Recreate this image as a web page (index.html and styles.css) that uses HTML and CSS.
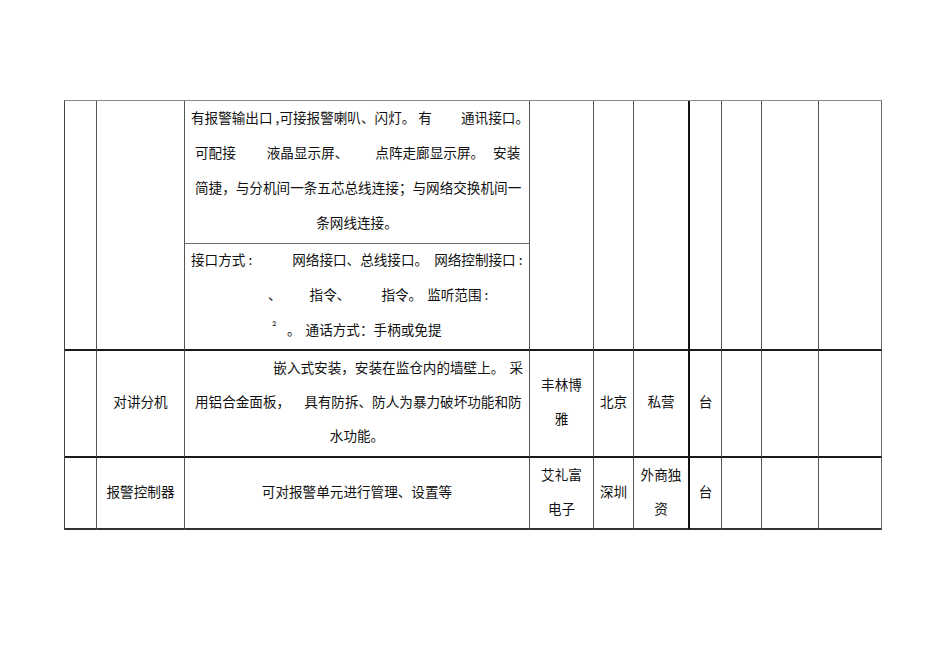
FILE: index.html
```html
<!DOCTYPE html>
<html lang="zh-CN">
<head>
<meta charset="utf-8">
<title>设备清单</title>
<link rel="stylesheet" href="styles.css">
</head>
<body>
<div class="page">
  <div class="sheet">
    <!-- row 1 -->
    <div class="cell tall"></div>
    <div class="cell tall"></div>
    <div class="cell desc top">
      <div class="ln spread pl6"><span>有报警输出口 ,可接报警喇叭、闪灯。 有</span><span>通讯接口。</span></div>
      <div class="ln pl10">可配接<span class="gap g31"></span>液晶显示屏、<span class="gap g27"></span>点阵走廊显示屏。<span class="gap g9"></span>安装</div>
      <div class="ln pl10">简捷，与分机间一条五芯总线连接；与网络交换机间一</div>
      <div class="ln ctr">条网线连接。</div>
    </div>
    <div class="cell tall"></div>
    <div class="cell tall"></div>
    <div class="cell tall c6"></div>
    <div class="cell tall"></div>
    <div class="cell tall"></div>
    <div class="cell tall"></div>
    <div class="cell tall c10"></div>
    <div class="cell desc mid">
      <div class="ln pl6">接口方式 :<span class="gap g40"></span>网络接口、总线接口。<span class="gap g6"></span>网络控制接口 :</div>
      <div class="ln pl83">、<span class="gap g28"></span>指令、<span class="gap g31"></span>指令。<span class="gap g5"></span>监听范围 :</div>
      <div class="ln pl87"><span class="sup">²</span>。<span class="gap g5"></span>通话方式：手柄或免提</div>
    </div>

    <!-- row 2 -->
    <div class="cell r2"></div>
    <div class="cell r2">对讲分机</div>
    <div class="cell desc r2">
      <div class="ln rt pr6">嵌入式安装，安装在监仓内的墙壁上。<span class="gap g5"></span>采</div>
      <div class="ln pl10">用铝合金面板，<span class="gap g14"></span>具有防拆、防人为暴力破坏功能和防</div>
      <div class="ln ctr">水功能。</div>
    </div>
    <div class="cell r2"><div>丰林博</div><div>雅</div></div>
    <div class="cell r2">北京</div>
    <div class="cell r2 c6">私营</div>
    <div class="cell r2">台</div>
    <div class="cell r2"></div>
    <div class="cell r2"></div>
    <div class="cell r2 c10"></div>

    <!-- row 3 -->
    <div class="cell r3"></div>
    <div class="cell r3">报警控制器</div>
    <div class="cell desc r3"><div class="ln ctr">可对报警单元进行管理、设置等</div></div>
    <div class="cell r3"><div>艾礼富</div><div>电子</div></div>
    <div class="cell r3">深圳</div>
    <div class="cell r3 c6"><div>外商独</div><div>资</div></div>
    <div class="cell r3">台</div>
    <div class="cell r3"></div>
    <div class="cell r3"></div>
    <div class="cell r3 c10"></div>
  </div>
</div>
</body>
</html>
```

FILE: styles.css
```css
html, body {
  margin: 0;
  padding: 0;
  background: #ffffff;
}

body {
  font-family: "Noto Sans CJK SC", "Noto Sans", sans-serif;
  font-size: 13.6px;
  color: #111111;
}

.page {
  padding: 100px 0 0 64px;
}

.sheet {
  display: grid;
  grid-template-columns: 32px 88px 345px 64px 40px 56px 32px 40px 57px 63px;
  grid-template-rows: 143px 107px 107px 72px;
  width: max-content;
  border-top: 1px solid #8a8a8a;
  border-left: 1px solid #444444;
}

.cell {
  display: flex;
  flex-direction: column;
  justify-content: center;
  padding-bottom: 5px;
  line-height: 34px;
  text-align: center;
  white-space: nowrap;
  border-right: 1px solid #555555;
  border-bottom: 1px solid #555555;
}

.tall {
  grid-row: span 2;
  border-bottom: 2px solid #1a1a1a;
}

.top {
  line-height: 35px;
  border-bottom: 1px solid #6a6a6a;
}

.mid {
  line-height: 35px;
  border-bottom: 2px solid #1a1a1a;
}

.r2 {
  border-bottom: 2px solid #1a1a1a;
}

.r3 {
  border-bottom: 2px solid #333333;
}

.c6 {
  border-right: 2px solid #111111;
}

.c10 {
  border-right-color: #666666;
}

.ln {
  text-align: left;
}

.ln.ctr {
  text-align: center;
}

.ln.rt {
  text-align: right;
}

.spread {
  display: flex;
  justify-content: space-between;
}

.pl6 { padding-left: 6px; }
.pl10 { padding-left: 10px; }
.pl83 { padding-left: 83px; }
.pl87 { padding-left: 87px; }
.pr6 { padding-right: 6px; }

.gap {
  display: inline-block;
}

.g5 { width: 5px; }
.g6 { width: 6px; }
.g9 { width: 9px; }
.g14 { width: 14px; }
.g27 { width: 27px; }
.g28 { width: 28px; }
.g31 { width: 31px; }
.g40 { width: 40px; }

.sup {
  display: inline-block;
  width: 15px;
  font-size: 11px;
  line-height: 1;
  vertical-align: 4px;
}
```
